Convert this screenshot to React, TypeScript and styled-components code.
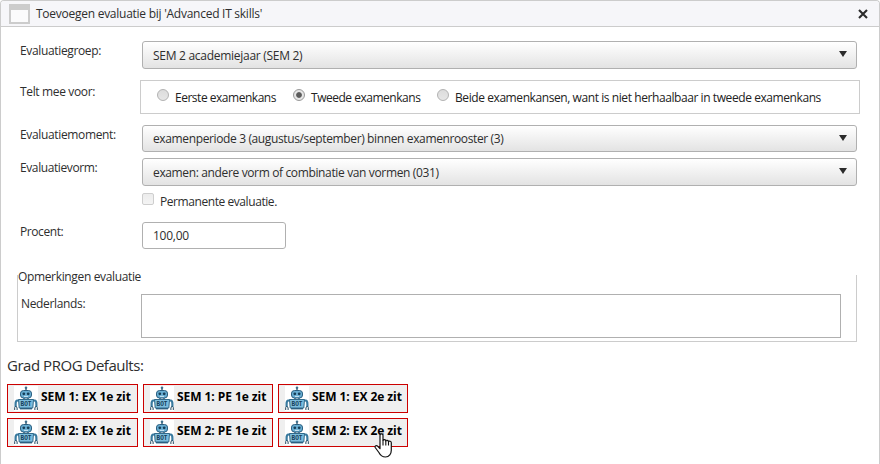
import React from "react";
import styled, { createGlobalStyle } from "styled-components";

const GlobalStyle = createGlobalStyle`
  *, *::before, *::after { box-sizing: border-box; }
  body { margin: 0; background: #fff; overflow: hidden; }
`;

const Dialog = styled.div`
  width: 880px;
  height: 464px;
  overflow: hidden;
  border: 1px solid #ccc;
  border-bottom: 0;
  border-radius: 4px 4px 0 0;
  background: #fff;
  color: #2e2e2e;
  font: 12px/16px "Open Sans", "Noto Sans", sans-serif;
`;

const TitleBar = styled.header`
  display: flex;
  align-items: center;
  height: 26px;
  padding: 0 11px 0 8px;
  border-bottom: 1px solid #ccc;
  background: #f6f6f9;
`;

const WindowIcon = styled.span`
  width: 21px;
  height: 20px;
  margin-right: 6px;
  border: 2px solid #ccc;
  border-top-width: 6px;
  background: #fbfbfc;
`;

const Text = styled.span<{ $spacing?: number }>`
  white-space: nowrap;
  letter-spacing: ${(p) => p.$spacing ?? 0}px;
`;

const CloseButton = styled.button`
  display: flex;
  margin-left: auto;
  padding: 0;
  border: 0;
  background: none;
`;

const Form = styled.form`
  padding: 14px 19px 0;
`;

const Row = styled.div<{ $height: number; $after: number }>`
  display: grid;
  grid-template-columns: 122px 1fr;
  height: ${(p) => p.$height}px;
  margin-bottom: ${(p) => p.$after}px;
`;

const Label = styled.label<{ $top?: number; $spacing?: number }>`
  padding-top: ${(p) => p.$top ?? 2}px;
  letter-spacing: ${(p) => p.$spacing ?? -0.35}px;
  white-space: nowrap;
`;

const Select = styled.div<{ $top: number }>`
  display: flex;
  align-items: flex-start;
  justify-content: space-between;
  width: 715px;
  padding: ${(p) => p.$top}px 9px 0 10px;
  border: 1px solid #b0b0b0;
  border-radius: 3px;
  background: linear-gradient(#fff, #e3e3e3);
`;

const Arrow = styled.svg<{ $offset: number }>`
  display: block;
  margin-top: ${(p) => p.$offset}px;
`;

const RadioBox = styled.div`
  display: flex;
  width: 720px;
  margin-left: -2px;
  padding: 8px 0 0 16px;
  border: 1px solid #ccc;
`;

const RadioOption = styled.label<{ $width: number }>`
  display: flex;
  width: ${(p) => p.$width}px;
`;

const Radio = styled.span<{ $checked?: boolean }>`
  width: 12px;
  height: 12px;
  margin-right: 6px;
  border: 1px solid ${(p) => (p.$checked ? "#999" : "#b2b2b2")};
  border-radius: 50%;
  background: ${(p) =>
    p.$checked
      ? "radial-gradient(circle, #5c5c5c 0 2.4px, #e6e6e6 3.3px)"
      : "linear-gradient(#dcdcdc, #e6e6e6)"};
`;

const OptionText = styled(Text)`
  padding-top: 1px;
  color: #222;
`;

const CheckLine = styled.label`
  display: flex;
  gap: 6px;
`;

const Checkbox = styled.span`
  width: 12px;
  height: 12px;
  border: 1px solid #cecece;
  border-radius: 2px;
  background: linear-gradient(#ececec, #f4f4f4);
`;

const CheckText = styled(Text)`
  padding-top: 1px;
`;

const Input = styled.div`
  width: 144px;
  padding: 5px 10px 4px;
  border: 1px solid #b0b0b0;
  border-radius: 3px;
`;

const Remarks = styled.section`
  display: flex;
  flex-direction: column;
  width: 840px;
  height: 67px;
  margin-left: -3px;
  border: 1px solid #ccc;
  border-top: 0;
`;

const RemarksTitle = styled.div`
  margin-top: -6px;
  width: 124px;
  height: 16px;
  letter-spacing: -0.35px;
  white-space: nowrap;
`;

const RemarksBody = styled.div`
  display: grid;
  grid-template-columns: 120px 700px;
  margin-top: 9px;
  padding-left: 3px;
`;

const TextArea = styled.div`
  height: 44px;
  border: 1px solid #b0b0b0;
`;

const Defaults = styled.section`
  padding: 12px 0 0 6px;
`;

const Heading = styled.h2`
  margin: 0 0 8px;
  font-size: 15px;
  font-weight: 400;
  line-height: 22px;
  letter-spacing: -0.47px;
`;

const ButtonGrid = styled.div`
  display: grid;
  grid-template-columns: 131px 130px 130px;
  gap: 5px;
`;

const DefaultButton = styled.button`
  position: relative;
  display: flex;
  height: 29px;
  padding: 1px 0 0 6px;
  border: 1px solid #cc0000;
  background: #efefef;
  color: #000;
  font: 700 12px/16px "Open Sans", "Noto Sans", sans-serif;
`;

const ButtonText = styled(Text)`
  padding: 3px 0 0 3px;
`;

const Cursor = styled.svg`
  position: absolute;
  left: 95px;
  top: 14px;
  z-index: 1;
`;

function Robot() {
  return (
    <svg width="24" height="25" viewBox="0 0 24 25">
      <rect width="24" height="25" fill="#fff" />
      <path d="M12 2v4M10 12v3M14 12v3" stroke="#2c526b" strokeWidth="1.3" />
      <circle cx="12" cy="1.8" r="1.3" fill="#3f6f8c" />
      <path d="M6 8h1M17 8h1" stroke="#2c526b" strokeWidth="2.4" />
      <rect x="6.500" y="4.5" width="11" height="7.5" rx="3" fill="#68aed3" stroke="#2c5f80" />
      <circle cx="9.8" cy="7.8" r="1.4" fill="#173e58" />
      <circle cx="14.2" cy="7.8" r="1.4" fill="#173e58" />
      <path d="M10 10.4h4" stroke="#cfe8f4" />
      <path d="M5 14.5H3.2Q1.5 15 1.6 18v3M19 14.5h1.8q1.7.5 1.6 3.5v3" fill="none" stroke="#397a9f" strokeWidth="2.2" />
      <path d="M.7 24v-2.5l1-1 1.4 1V24M20.9 24v-2.5l1.4-1 1 1V24" fill="none" stroke="#244960" />
      <path d="M4.500 13.500h15l-.7 8.500H5.200z" fill="#7dbddd" stroke="#326b8c" />
      <path d="M6 22.700h12" stroke="#2c5f80" strokeWidth="1.4" />
      <text x="12" y="20.2" textAnchor="middle" textLength="11" lengthAdjust="spacingAndGlyphs" fontSize="6.5" fontWeight="700" fontFamily="Liberation Mono, monospace" fill="#153e59">BOT</text>
    </svg>
  );
}

function DropDown({ text, spacing, top = 6 }: { text: string; spacing: number; top?: number }) {
  return (
    <Select $top={top}>
      <Text $spacing={spacing}>{text}</Text>
      <Arrow $offset={9 - top} width="8" height="6" viewBox="0 0 8 6">
        <path d="M0 0h8L4 6z" fill="#2b2b2b" />
      </Arrow>
    </Select>
  );
}

const buttons = [
  "SEM 1: EX 1e zit",
  "SEM 1: PE 1e zit",
  "SEM 1: EX 2e zit",
  "SEM 2: EX 1e zit",
  "SEM 2: PE 1e zit",
  "SEM 2: EX 2e zit",
];

export default function App() {
  return (
    <>
      <GlobalStyle />
      <Dialog>
        <TitleBar>
          <WindowIcon />
          <Text $spacing={-0.26}>Toevoegen evaluatie bij 'Advanced IT skills'</Text>
          <CloseButton type="button" aria-label="Sluiten">
            <svg width="10" height="10" viewBox="0 0 10 10">
              <path d="M1 1l8 8M9 1L1 9" stroke="#2b2b2b" strokeWidth="2.1" />
            </svg>
          </CloseButton>
        </TitleBar>
        <Form>
          <Row $height={28} $after={11}>
            <Label>Evaluatiegroep:</Label>
            <DropDown text="SEM 2 academiejaar (SEM 2)" spacing={-0.28} />
          </Row>
          <Row $height={34} $after={11}>
            <Label $top={4}>Telt mee voor:</Label>
            <RadioBox>
              <RadioOption $width={136}>
                <Radio />
                <OptionText $spacing={-0.48}>Eerste examenkans</OptionText>
              </RadioOption>
              <RadioOption $width={144}>
                <Radio $checked />
                <OptionText $spacing={-0.48}>Tweede examenkans</OptionText>
              </RadioOption>
              <RadioOption $width={400}>
                <Radio />
                <OptionText $spacing={-0.42}>Beide examenkansen, want is niet herhaalbaar in tweede examenkans</OptionText>
              </RadioOption>
            </RadioBox>
          </Row>
          <Row $height={27} $after={6}>
            <Label>Evaluatiemoment:</Label>
            <DropDown text="examenperiode 3 (augustus/september) binnen examenrooster (3)" spacing={-0.37} top={5} />
          </Row>
          <Row $height={28} $after={7}>
            <Label $spacing={-0.4}>Evaluatievorm:</Label>
            <DropDown text="examen: andere vorm of combinatie van vormen (031)" spacing={-0.36} />
          </Row>
          <Row $height={16} $after={13}>
            <span />
            <CheckLine>
              <Checkbox />
              <CheckText $spacing={-0.43}>Permanente evaluatie.</CheckText>
            </CheckLine>
          </Row>
          <Row $height={27} $after={26}>
            <Label $spacing={-0.42}>Procent:</Label>
            <Input><Text $spacing={-0.25}>100,00</Text></Input>
          </Row>
          <Remarks>
            <RemarksTitle>Opmerkingen evaluatie</RemarksTitle>
            <RemarksBody>
              <Label>Nederlands:</Label>
              <TextArea />
            </RemarksBody>
          </Remarks>
        </Form>
        <Defaults>
          <Heading>Grad PROG Defaults:</Heading>
          <ButtonGrid>
            {buttons.map((label, i) => (
              <DefaultButton key={label} type="button">
                <Robot />
                <ButtonText $spacing={-0.06}>{label}</ButtonText>
                {i === 5 && (
                  <Cursor width="20" height="26" viewBox="0 0 20 26">
                    <path
                      d="M6 2.5c0-2 3-2 3 0v5c.4-1.200 2.700-1.200 2.800.4.5-1 2.500-.8 2.700.7.7-.8 2.800-.4 2.800 1.200v7.500c0 3.200-2 6.700-5.800 6.700-3.500 0-5.200-1.700-6.600-4.500L1.200 14.500c-.8-1.700 1.400-2.600 2.600-1.200L6 15.700z"
                      fill="#fff"
                      stroke="#111"
                      strokeWidth="1.2"
                      strokeLinejoin="round"
                    />
                    <path d="M9 7.500v5M11.800 8v4.500M14.500 9v3.500" fill="none" stroke="#111" strokeWidth="1.1" />
                  </Cursor>
                )}
              </DefaultButton>
            ))}
          </ButtonGrid>
        </Defaults>
      </Dialog>
    </>
  );
}
